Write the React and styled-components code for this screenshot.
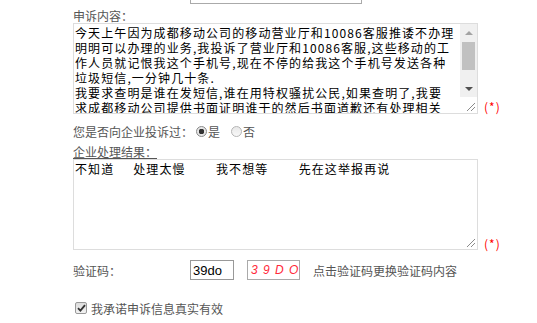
import React from "react";
import styled, { createGlobalStyle } from "styled-components";

const GlobalStyle = createGlobalStyle`
  body {
    margin: 0;
    background: #fff;
    font-family: "Noto Sans CJK SC", "Microsoft YaHei", sans-serif;
    font-size: 12px;
    color: #555;
    overflow: hidden;
  }
`;

const Form = styled.div`
  width: 537px;
  height: 323px;
  padding-left: 73px;
  box-sizing: border-box;
  overflow: hidden;
`;

const Stub = styled.input`
  display: block;
  width: 172px;
  height: 24px;
  margin: -20px 0 0 117px;
  border: 1px solid #aaa;
  box-sizing: border-box;
  background: #fff;
`;

const Label = styled.div`
  line-height: 15px;
  margin-top: ${(p) => p.$top || 0}px;
  color: #555;
  text-decoration: ${(p) => (p.$underline ? "underline" : "none")};
`;

const FieldRow = styled.div`
  display: flex;
  align-items: flex-end;
`;

const AreaFrame = styled.div`
  position: relative;
  display: flex;
  width: 405px;
  height: 91px;
  box-sizing: border-box;
  border: 1px solid #ddd;
  background: #fff;
`;

const Area = styled.textarea`
  flex: 1;
  min-width: 0;
  margin: 0;
  padding: 1px;
  border: none;
  font-family: "Noto Sans CJK SC", sans-serif;
  font-size: 12px;
  line-height: 15px;
  letter-spacing: 1.1px;
  color: #000;
  white-space: pre;
  overflow: hidden;
  resize: none;
  outline: none;
  background: transparent;
`;

const ScrollBar = styled.div`
  display: flex;
  flex-direction: column;
  width: 17px;
  flex-shrink: 0;
`;

const Arrow = styled.div`
  display: flex;
  align-items: center;
  justify-content: center;
  height: 17px;
  background: #f0f0f0;
`;

const Track = styled.div`
  flex: 1;
  padding: 1px 2px 0;
  background: #f0f0f0;
`;

const Thumb = styled.div`
  height: 28px;
  background: #c1c1c1;
`;

const Corner = styled.div`
  display: flex;
  align-items: flex-end;
  justify-content: flex-end;
  height: 16px;
  background: #fff;
`;

const GripOverlay = styled.span`
  position: absolute;
  right: 0;
  bottom: 0;
  display: flex;
`;

const Required = styled.span`
  margin-left: 6px;
  line-height: 14px;
  color: #f00;
  letter-spacing: 1px;
  position: relative;
  top: ${(p) => p.$drop || 0}px;
`;

const ChoiceRow = styled.div`
  display: flex;
  align-items: center;
  height: 18px;
  margin-top: 8px;
  color: #555;
`;

const Radio = styled.span`
  display: inline-block;
  width: 11px;
  height: 11px;
  margin: 0 1px 0 3px;
  border: 1px solid ${(p) => (p.$on ? "#8a8a8a" : "#b5b5b5")};
  border-radius: 50%;
  box-sizing: border-box;
  background: ${(p) =>
    p.$on
      ? "radial-gradient(circle, #333 0 2.6px, #e6e6e6 3px)"
      : "linear-gradient(#e8e8e8, #f8f8f8)"};
`;

const Option = styled.span`
  margin-right: ${(p) => p.$gap || 0}px;
`;

const CodeRow = styled.div`
  display: flex;
  align-items: center;
  margin-top: 10px;
  height: 20px;
`;

const CodeLabel = styled.span`
  width: 117px;
  color: #555;
`;

const CodeInput = styled.input`
  width: 44px;
  height: 20px;
  box-sizing: border-box;
  padding: 0 2px;
  margin: 0;
  border: 1px solid #999;
  font-family: "Liberation Sans", Arial, sans-serif;
  font-size: 13px;
  color: #000;
  outline: none;
`;

const Captcha = styled.span`
  width: 53px;
  height: 20px;
  box-sizing: border-box;
  margin-left: 13px;
  padding-left: 3px;
  border: 1px solid #aaa;
  font-family: "Liberation Sans", Arial, sans-serif;
  font-style: italic;
  font-size: 12px;
  line-height: 18px;
  letter-spacing: 1px;
  color: #ff2a3a;
  white-space: pre;
  cursor: pointer;
`;

const Hint = styled.span`
  margin-left: 13px;
  color: #555;
`;

const AgreeRow = styled.label`
  display: flex;
  align-items: center;
  margin-top: 21px;
  height: 14px;
  padding-left: 2px;
  color: #555;
`;

const CheckBox = styled.span`
  display: inline-flex;
  align-items: center;
  justify-content: center;
  width: 12px;
  height: 12px;
  box-sizing: border-box;
  margin-right: 4px;
  border: 1px solid #999;
  border-radius: 2px;
  background: linear-gradient(#ddd, #f2f2f2);
`;

const Grip = () => (
  <svg width="16" height="16" viewBox="0 0 16 16">
    <path d="M14 6 L6 14 M14 10 L10 14" stroke="#8a8a8a" strokeWidth="1" />
  </svg>
);

const Triangle = ({ up, color }) => (
  <svg width="8" height="4" viewBox="0 0 8 4">
    <path d={up ? "M0 4 L4 0 L8 4 Z" : "M0 0 L8 0 L4 4 Z"} fill={color} />
  </svg>
);

const complaint = [
  "今天上午因为成都移动公司的移动营业厅和10086客服推诿不办理",
  "明明可以办理的业务,我投诉了营业厅和10086客服,这些移动的工",
  "作人员就记恨我这个手机号,现在不停的给我这个手机号发送各种",
  "垃圾短信,一分钟几十条.",
  "我要求查明是谁在发短信,谁在用特权骚扰公民,如果查明了,我要",
  "求成都移动公司提供书面证明谁干的然后书面道歉还有处理相关",
  "人员,并且赔偿我的损失.",
].join("\n");

const result = "不知道     处理太慢        我不想等        先在这举报再说";

export default function App() {
  return (
    <>
      <GlobalStyle />
      <Form>
        <Stub readOnly />
        <Label $top={4}>申诉内容：</Label>
        <FieldRow>
          <AreaFrame>
            <Area readOnly defaultValue={complaint} />
            <ScrollBar>
              <Arrow>
                <Triangle up color="#a3a3a3" />
              </Arrow>
              <Track>
                <Thumb />
              </Track>
              <Arrow>
                <Triangle color="#505050" />
              </Arrow>
              <Corner>
                <Grip />
              </Corner>
            </ScrollBar>
          </AreaFrame>
          <Required>(*)</Required>
        </FieldRow>

        <ChoiceRow>
          您是否向企业投诉过：
          <Radio $on />
          <Option $gap={8}>是</Option>
          <Radio />
          <Option>否</Option>
        </ChoiceRow>

        <Label $top={4} $underline>
          企业处理结果：
        </Label>
        <FieldRow>
          <AreaFrame>
            <Area readOnly defaultValue={result} />
            <GripOverlay>
              <Grip />
            </GripOverlay>
          </AreaFrame>
          <Required $drop={1}>(*)</Required>
        </FieldRow>

        <CodeRow>
          <CodeLabel>验证码：</CodeLabel>
          <CodeInput readOnly defaultValue="39do" />
          <Captcha>3 9 D O</Captcha>
          <Hint>点击验证码更换验证码内容</Hint>
        </CodeRow>

        <AgreeRow>
          <CheckBox>
            <svg width="9" height="8" viewBox="0 0 9 8">
              <path
                d="M1 4.2 L3.4 6.6 L8 1.2"
                fill="none"
                stroke="#333"
                strokeWidth="1.8"
              />
            </svg>
          </CheckBox>
          我承诺申诉信息真实有效
        </AgreeRow>
      </Form>
    </>
  );
}
